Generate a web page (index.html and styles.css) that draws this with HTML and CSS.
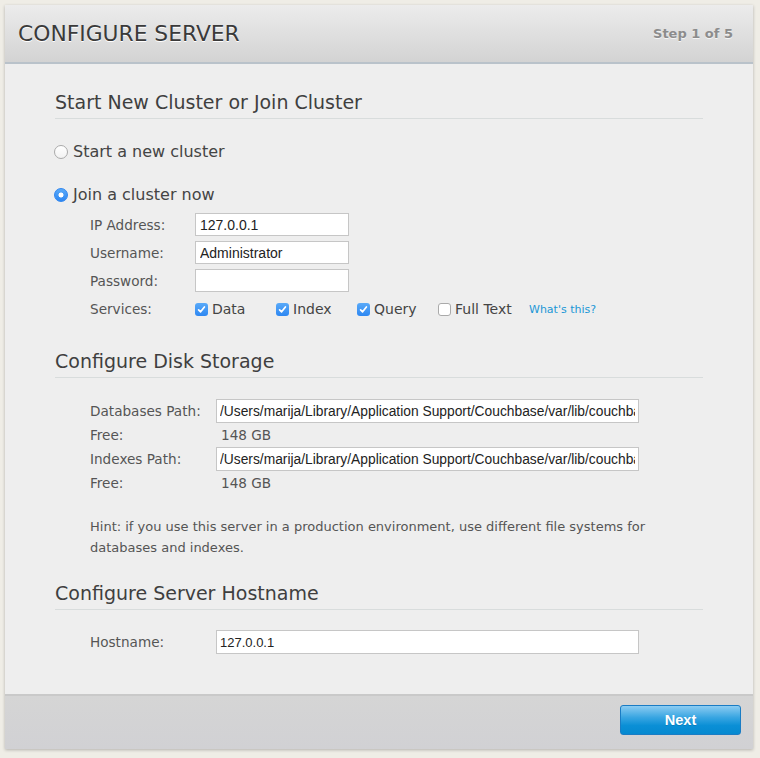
FILE: index.html
```html
<!DOCTYPE html>
<html>
<head>
<meta charset="utf-8">
<link rel="stylesheet" href="styles.css">
</head>
<body>
<div class="panel">
  <header class="head">
    <h1 class="title">CONFIGURE SERVER</h1>
    <span class="step">Step 1 of 5</span>
  </header>
  <main class="content">
    <h2 class="sec first">Start New Cluster or Join Cluster</h2>
    <div class="radio-row r1"><span class="radio"></span><span>Start a new cluster</span></div>
    <div class="radio-row r2"><span class="radio on"></span><span>Join a cluster now</span></div>
    <div class="join">
      <div class="frow"><label class="lab">IP Address:</label><input class="inp small" type="text" value="127.0.0.1"></div>
      <div class="frow"><label class="lab">Username:</label><input class="inp small" type="text" value="Administrator"></div>
      <div class="frow"><label class="lab">Password:</label><input class="inp small" type="password" value=""></div>
      <div class="srow">
        <label class="lab">Services:</label>
        <div class="checks">
          <span class="chk-item"><span class="cb on"><svg viewBox="0 0 13 13" width="13" height="13"><path d="M3.6 6.8 L5.6 8.8 L9.4 4" fill="none" stroke="#fff" stroke-width="1.7" stroke-linecap="round" stroke-linejoin="round"/></svg></span>Data</span>
          <span class="chk-item"><span class="cb on"><svg viewBox="0 0 13 13" width="13" height="13"><path d="M3.6 6.8 L5.6 8.8 L9.4 4" fill="none" stroke="#fff" stroke-width="1.7" stroke-linecap="round" stroke-linejoin="round"/></svg></span>Index</span>
          <span class="chk-item"><span class="cb on"><svg viewBox="0 0 13 13" width="13" height="13"><path d="M3.6 6.8 L5.6 8.8 L9.4 4" fill="none" stroke="#fff" stroke-width="1.7" stroke-linecap="round" stroke-linejoin="round"/></svg></span>Query</span>
          <span class="chk-item"><span class="cb"></span>Full Text</span>
          <a class="what" href="#">What's this?</a>
        </div>
      </div>
    </div>

    <h2 class="sec second">Configure Disk Storage</h2>
    <div class="disk">
      <div class="drow"><label class="lab">Databases Path:</label><input class="inp wide" type="text" value="/Users/marija/Library/Application Support/Couchbase/var/lib/couchbase/data"></div>
      <div class="drow"><span class="lab">Free:</span><span class="val">148 GB</span></div>
      <div class="drow"><label class="lab">Indexes Path:</label><input class="inp wide" type="text" value="/Users/marija/Library/Application Support/Couchbase/var/lib/couchbase/data"></div>
      <div class="drow"><span class="lab">Free:</span><span class="val">148 GB</span></div>
    </div>
    <p class="hint">Hint: if you use this server in a production environment, use different file systems for databases and indexes.</p>

    <h2 class="sec third">Configure Server Hostname</h2>
    <div class="disk host">
      <div class="drow"><label class="lab">Hostname:</label><input class="inp wide hostinp" type="text" value="127.0.0.1"></div>
    </div>
  </main>
  <footer class="foot">
    <button class="next" type="button">Next</button>
  </footer>
</div>
</body>
</html>
```
FILE: styles.css
```css
* { box-sizing: border-box; }
html, body { margin: 0; padding: 0; }
body {
  background: #efede6;
  font-family: "DejaVu Sans", Verdana, sans-serif;
  color: #555;
  width: 760px;
  height: 758px;
  overflow: hidden;
}
.panel {
  margin: 5px 0 0 5px;
  width: 748px;
  height: 744px;
  background: #eeeeee;
  box-shadow: 0 1px 3px rgba(0,0,0,0.25);
  display: flex;
  flex-direction: column;
}
.head {
  height: 59px;
  background: linear-gradient(#ececec, #d3d3d3);
  border-bottom: 2px solid #b9c2ca;
  display: flex;
  align-items: center;
  justify-content: space-between;
  padding: 0 20px 0 13px;
}
.title {
  margin: 0;
  font-weight: normal;
  font-size: 21.8px;
  line-height: 28px;
  color: #3a3a3a;
  text-shadow: 0 1px 0 #fff;
}
.step {
  font-weight: bold;
  font-size: 13px;
  color: #8c8c8c;
  text-shadow: 0 1px 0 #f4f4f4;
}
.content {
  flex: 1;
  padding: 0 50px;
}
.sec {
  margin: 0;
  font-weight: normal;
  font-size: 19px;
  line-height: 24px;
  color: #3f3f3f;
  padding-bottom: 4px;
  border-bottom: 1px solid #d8dcdc;
}
.sec.first { margin-top: 26px; }
.sec.second { margin-top: 29px; }
.sec.third { margin-top: 23px; }
.radio-row {
  display: flex;
  align-items: center;
  font-size: 16px;
  line-height: 22px;
  height: 22px;
  color: #444;
}
.radio-row.r1 { margin-top: 22px; }
.radio-row.r2 { margin-top: 21px; }
.radio {
  width: 14px;
  height: 14px;
  border-radius: 50%;
  border: 1px solid #aaa;
  background: linear-gradient(#fff, #f2f2f2);
  margin: 0 5px 0 -1px;
  flex: none;
}
.radio.on {
  border: 1px solid #2f86f0;
  background: radial-gradient(circle, #fff 0 2.2px, transparent 2.8px), linear-gradient(#5aaaf8, #2d87f2);
}
.join {
  padding-left: 35px;
  margin-top: 7px;
}
.frow {
  display: flex;
  align-items: center;
  height: 23px;
  margin-bottom: 5px;
}
.lab {
  font-size: 13.6px;
  color: #555;
  width: 105px;
  flex: none;
}
.inp {
  font-family: "Liberation Sans", Arial, sans-serif;
  font-size: 14px;
  color: #222;
  border: 1px solid #c6c6c6;
  background: #fff;
  padding: 0 4px;
  margin: 0;
  outline: none;
  border-radius: 0;
}
.inp.small { width: 154px; height: 23px; }
.inp.wide { width: 423px; height: 24px; padding: 0 3px; font-size: 13.8px; }
.inp.hostinp { font-size: 13px; }
.srow {
  display: flex;
  align-items: center;
  height: 22px;
  margin-top: 6px;
}
.checks {
  display: flex;
  align-items: center;
  font-size: 14px;
}
.chk-item {
  display: flex;
  align-items: center;
  width: 81px;
  flex: none;
  color: #444;
}
.cb {
  width: 13px;
  height: 13px;
  border-radius: 3px;
  border: 1px solid #aaa;
  background: #fff;
  margin-right: 4px;
  flex: none;
  display: flex;
  align-items: center;
  justify-content: center;
}
.cb.on {
  border: none;
  background: linear-gradient(#5aaaf8, #2d87f2);
}
.cb svg { display: block; }
.what {
  margin-left: 10px;
  font-size: 11px;
  color: #1b97d6;
  text-decoration: none;
}
.disk {
  padding-left: 35px;
  margin-top: 21px;
}
.drow {
  display: flex;
  align-items: center;
  height: 24px;
}
.drow .lab { width: 126px; }
.val {
  font-size: 13.6px;
  color: #555;
  padding-left: 5px;
}
.hint {
  margin: 21px 0 0 35px;
  font-size: 13px;
  line-height: 21px;
  color: #555;
  width: 600px;
}
.disk.host { margin-top: 20px; }
.foot {
  height: 55px;
  border-top: 2px solid #c9c9c9;
  background: linear-gradient(#d5d5d5, #d1d1d4);
  display: flex;
  justify-content: flex-end;
  align-items: flex-start;
  padding: 9px 12px 0 0;
}
.next {
  width: 121px;
  height: 30px;
  border: 1px solid #1a7cc4;
  border-radius: 3px;
  background: linear-gradient(#8cccf2 0%, #3aa6e2 40%, #0a8fd6 70%, #0589d0 100%);
  color: #fff;
  font-family: "Liberation Sans", Arial, sans-serif;
  font-weight: bold;
  font-size: 14.5px;
  text-shadow: 0 1px 0 rgba(0,0,0,0.15);
  padding: 0;
  cursor: pointer;
}
```
